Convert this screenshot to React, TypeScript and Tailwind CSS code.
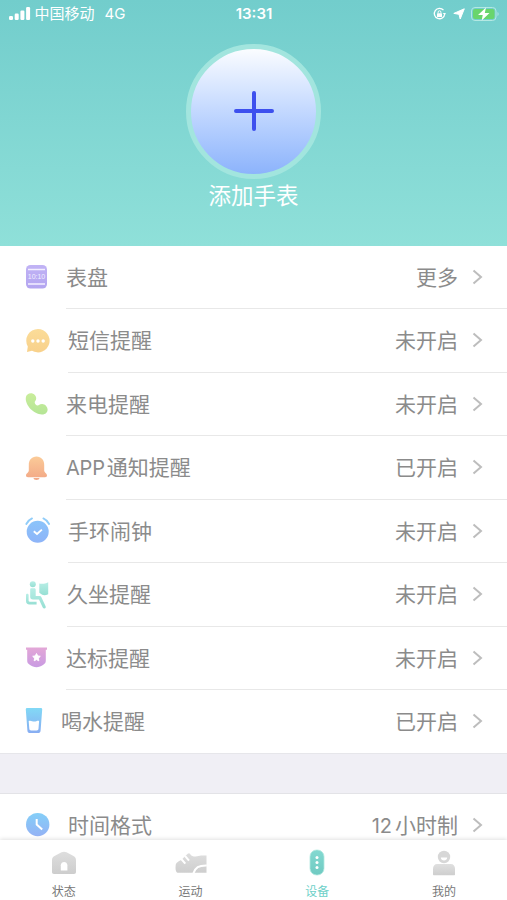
import type { ReactNode } from "react";

type Item = {
  label: ReactNode;
  value: ReactNode;
  icon: ReactNode;
  indent: string;
};

function Grad({ id, from, to }: { id: string; from: string; to: string }) {
  return (
    <linearGradient id={id} x1="0" y1="0" x2="0" y2="1">
      <stop offset="0" stopColor={from} />
      <stop offset="1" stopColor={to} />
    </linearGradient>
  );
}

function DialIcon() {
  return (
    <svg width="24" height="28" viewBox="0 0 24 28">
      <Grad id="dial" from="#c1b3f5" to="#b3a5f0" />
      <rect x="1" y="2" width="21" height="23.5" rx="4.5" fill="url(#dial)" />
      <path d="M3 6.5h17M3 21h17" stroke="#f3efff" strokeWidth="1.5" />
      <text x="11.5" y="16.2" textAnchor="middle" fontSize="7" fill="#f3efff">10:10</text>
    </svg>
  );
}

function MessageIcon() {
  return (
    <svg width="26" height="28" viewBox="0 0 26 28">
      <Grad id="msg" from="#fbdc99" to="#f8d18b" />
      <path d="M13 2a11.7 11.7 0 1 1-6 21.8L2 25l.8-5.5A11.7 11.7 0 0 1 13 2Z" fill="url(#msg)" />
      <g fill="#fff">
        <circle cx="7.8" cy="14" r="1.7" />
        <circle cx="13" cy="14" r="1.7" />
        <circle cx="18.2" cy="14" r="1.7" />
      </g>
    </svg>
  );
}

function PhoneIcon() {
  return (
    <svg width="24" height="28" viewBox="0 0 24 28">
      <Grad id="phone" from="#c9ed9b" to="#b5e596" />
      <path
        d="M.8 7.8C1 4.8 3.4 3.3 6 3.3c2.7 0 5.1 2.3 5.2 5 .1 2.2-1.6 2.8-1.5 4.2.1 1.6 1.6 3.1 3 3 1.2-.1 1.8-1.7 4.5-1.6 3 .2 5.3 2.8 5.4 5.5.1 3-2.1 4.9-5.4 5C9 24.6.1 15.5.8 7.8Z"
        fill="url(#phone)"
      />
    </svg>
  );
}

function BellIcon() {
  return (
    <svg width="24" height="28" viewBox="0 0 24 28">
      <Grad id="bell" from="#fbcb98" to="#f2a786" />
      <path
        d="M11.5 2.6c4.8 0 7.7 3.6 7.7 8.2v5.7c0 2.2 2.8 2.6 2.8 5 0 1.2-.7 1.7-2 1.7H3c-1.3 0-2-.5-2-1.7 0-2.4 2.8-2.8 2.8-5v-5.7c0-4.6 2.9-8.2 7.7-8.2ZM8.5 24h6c0 1.2-1.4 1.9-3 1.9s-3-.7-3-1.9Z"
        fill="url(#bell)"
      />
    </svg>
  );
}

function AlarmIcon() {
  return (
    <svg width="26" height="28" viewBox="0 0 26 28">
      <Grad id="alarm" from="#8bc4fa" to="#8eb4f8" />
      <circle cx="12.7" cy="14.7" r="11" fill="url(#alarm)" />
      <path d="M1.3 7C2.6 4.5 4.6 2.5 7 1.4M24.1 7c-1.3-2.5-3.3-4.5-5.7-5.6" stroke="#91cdf9" strokeWidth="1.9" strokeLinecap="round" fill="none" />
      <path d="m8.8 14.3 3.2 2.7 4.9-4.4" stroke="#fff" strokeWidth="1.9" fill="none" />
    </svg>
  );
}

function SitIcon() {
  return (
    <svg width="26" height="30" viewBox="0 0 26 30">
      <Grad id="sit" from="#b8eee6" to="#96dfd3" />
      <g fill="url(#sit)">
        <circle cx="7.8" cy="4.2" r="3" />
        <path d="M14.3 3.6c3.3.5 6.1 0 8.9-1.4v12c-2.4 1.2-4.5 1.2-6 .6l-2.9-2Z" />
        <path d="M6.4 8.2h2.8c1 0 1.5.6 1.5 1.6v6.1h3.6c1 0 1.7.5 2.1 1.4l4.2 9c.5 1.2-.1 2.1-1.1 2.1-.9 0-1.5-.4-1.9-1.2L14 19.6H8c-1.9 0-2.8-1-2.8-2.8V9.6c0-.9.4-1.4 1.2-1.4Z" />
        <path d="M1 15c0-1.7 2.6-1.7 2.6 0v5.6c0 .7.4 1.1 1.1 1.1h6.9v2.8H4.6C2.2 24.500 1 23.300 1 21Z" />
      </g>
    </svg>
  );
}

function BadgeIcon() {
  return (
    <svg width="24" height="28" viewBox="0 0 24 28">
      <Grad id="badge" from="#e3a7d7" to="#c99be2" />
      <path d="M1 3.5h21v2.3h-1.2v10.8c0 2-.6 3.1-2.5 4.1-2 1.300-4.500 2.500-6.800 2.500s-4.800-1.200-6.800-2.500c-1.900-1-2.500-2.100-2.500-4.100V5.800H1Z" fill="url(#badge)" />
      <path d="m11.5 9.500 1.200 2.400 2.600.4-1.900 1.900.4 2.600-2.300-1.200-2.300 1.200.4-2.600-1.900-1.900 2.600-.4Z" fill="#fff" stroke="#fff" strokeLinejoin="round" />
    </svg>
  );
}

function CupIcon() {
  return (
    <svg width="20" height="28" viewBox="0 0 20 28">
      <Grad id="cup" from="#82d9f6" to="#88adf2" />
      <path d="M2.2 1h13.6c1 0 1.5.6 1.4 1.6l-1.600 20.800c-.1 1.800-1.100 2.600-2.800 2.600H5.200c-1.700 0-2.700-.8-2.800-2.600L.8 2.600C.7 1.600 1.200 1 2.200 1Z" fill="url(#cup)" />
      <path d="M3.700 14c2.100-1 3.400.6 5.500.6s3.100-1.200 4.900-.6l-.6 7.800c-.1 1.200-.7 1.700-1.800 1.700H6.100c-1.100 0-1.700-.5-1.800-1.700Z" fill="#fff" />
    </svg>
  );
}

function ClockIcon() {
  return (
    <svg width="26" height="28" viewBox="0 0 26 28">
      <Grad id="clock" from="#84cff8" to="#94b2f5" />
      <circle cx="12.7" cy="13.6" r="11.7" fill="url(#clock)" />
      <path d="M11.7 8v5.500l5.500 5" stroke="#fff" strokeWidth="2" fill="none" />
    </svg>
  );
}

const LATIN = "font-['Inter','Noto_Sans_CJK_SC',sans-serif] text-[20px]";

const items: Item[] = [
  { label: "表盘", value: "更多", icon: <DialIcon />, indent: "pl-[66px]" },
  { label: "短信提醒", value: "未开启", icon: <MessageIcon />, indent: "pl-[68px]" },
  { label: "来电提醒", value: "未开启", icon: <PhoneIcon />, indent: "pl-[66px]" },
  {
    label: <><span className={`${LATIN} mr-[2px] tracking-[-0.2px]`}>APP</span>通知提醒</>,
    value: "已开启",
    icon: <BellIcon />,
    indent: "pl-[66px]",
  },
  { label: "手环闹钟", value: "未开启", icon: <AlarmIcon />, indent: "pl-[68px]" },
  { label: "久坐提醒", value: "未开启", icon: <SitIcon />, indent: "pl-[67px]" },
  { label: "达标提醒", value: "未开启", icon: <BadgeIcon />, indent: "pl-[66px]" },
  { label: "喝水提醒", value: "已开启", icon: <CupIcon />, indent: "pl-[61px]" },
];

const timeItem: Item = {
  label: "时间格式",
  value: <><span className={`${LATIN} mr-[3px]`}>12</span>小时制</>,
  icon: <ClockIcon />,
  indent: "pl-[68px]",
};

function Row({ item, last }: { item: Item; last?: boolean }) {
  return (
    <div className={`grid h-[63.5px] shrink-0 grid-cols-1 ${last ? "border-b border-[#e6e6ea]" : ""}`}>
      <div className="col-start-1 row-start-1 flex items-center pl-[25px]">{item.icon}</div>
      <div className={`col-start-1 row-start-1 flex ${item.indent}`}>
        <div className={`flex flex-1 items-center justify-between pr-6 text-[21px] leading-[30px] text-[#8b8b8b] ${last ? "" : "border-b border-[#e8e8e8]"}`}>
          <span className="whitespace-nowrap pt-[2px]">{item.label}</span>
          <span className="flex items-center gap-[14px] whitespace-nowrap">
            <span className="pt-[2px]">{item.value}</span>
            <svg width="11" height="16" viewBox="0 0 11 16" fill="none" stroke="#bdbdbd" strokeWidth="2">
              <path d="m1.500 1.500 7.500 6.500-7.500 6.500" />
            </svg>
          </span>
        </div>
      </div>
    </div>
  );
}

function StatusBar() {
  return (
    <div className="flex h-7 w-full items-center justify-between pl-[9px] pr-[8px] text-white">
      <div className="flex flex-1 items-center text-[15px]">
        <svg width="22" height="14" viewBox="0 0 22 14" fill="#fff">
          <rect x="0" y="9" width="4" height="4" rx="1.2" />
          <rect x="5.700" y="6.500" width="4" height="6.500" rx="1.2" />
          <rect x="11.400" y="3.500" width="4" height="9.500" rx="1.2" />
          <rect x="17.100" y="0" width="4" height="13" rx="1.2" />
        </svg>
        <span className="ml-[3.5px]">中国移动</span>
        <span className="ml-[10px] font-['Inter',sans-serif]">4G</span>
      </div>
      <span className="font-['Inter',sans-serif] text-[15px] font-semibold">13:31</span>
      <div className="flex flex-1 items-center justify-end gap-[7px]">
        <svg width="13" height="14" viewBox="0 0 13 14" fill="none" stroke="#fff">
          <path d="M10.500 3.200A5.200 5.200 0 1 0 11.700 7" strokeWidth="1.300" />
          <path d="m9.600 6 2 2 1.400-2Z" fill="#fff" stroke="none" />
          <rect x="4" y="6.200" width="5" height="3.800" rx=".6" fill="#fff" stroke="none" />
          <path d="M5.100 6.400V5.200a1.400 1.400 0 0 1 2.800 0v1.200" />
        </svg>
        <svg width="12" height="12" viewBox="0 0 12 12" fill="#fff" stroke="#fff" strokeLinejoin="round">
          <path d="M11.300.8 7.200 11 6 6.300.8 5.400Z" />
        </svg>
        <svg width="28" height="16" viewBox="0 0 28 16" className="-ml-px">
          <rect x=".5" y="1.500" width="24.500" height="13" rx="3.500" fill="none" stroke="#b4e8e3" />
          <rect x="2" y="3" width="21.500" height="10" rx="2" fill="#69d56d" />
          <path d="M26.500 6v4c1.500-.6 1.500-3.400 0-4Z" fill="#b4e8e3" />
          <path d="M15 1.500 7 9h4.700l-1 5.500L18.500 7h-4.700Z" fill="#fff" />
        </svg>
      </div>
    </div>
  );
}

function TabIcon({ name }: { name: string }) {
  if (name === "shoe") {
    return (
      <svg width="32" height="26" viewBox="0 0 32 26">
        <Grad id="shoe" from="#dedede" to="#cecece" />
        <path d="M.700 15c.4-2.800 3.300-3.600 6-5.500l6-5.700c.8-.8 1.800-.9 2.400.1 1 1.700 3 2.700 5.400 2.700 2.200 0 3.800-1 5.500-1h5.500v17.200H3.200C.8 22.800.2 19.500.7 15Z" fill="url(#shoe)" />
        <path d="m6.300 9 4 4.700M10 5.900l4 4.800M18.300 23.500c2.100-6 5.200-8.200 13.500-8" stroke="#fff" strokeWidth="2" fill="none" />
      </svg>
    );
  }
  if (name === "device") {
    return (
      <svg width="18" height="28" viewBox="0 0 18 28">
        <Grad id="device" from="#83d9d1" to="#70cac2" />
        <rect x="2" y="1" width="14" height="25" rx="6.500" fill="url(#device)" stroke="#b1e8e0" strokeWidth=".8" />
        <g fill="#fff">
          <circle cx="9" cy="8.500" r="1.500" />
          <circle cx="9" cy="13.500" r="1.500" />
          <circle cx="9" cy="18.500" r="1.500" />
        </g>
      </svg>
    );
  }
  if (name === "user") {
    return (
      <svg width="24" height="26" viewBox="0 0 24 26">
        <Grad id="user" from="#dfdfdf" to="#cecece" />
        <circle cx="12" cy="7" r="6.200" fill="#d7d7d7" />
        <path d="M8.800 7.400h6.400c-.1 4-6.300 4-6.400 0Z" fill="#fff" />
        <path d="M5.400 14h13.200c3 0 4.400 2.100 4.400 5v5.200c0 .6-.3 1-1 1H2c-.7 0-1-.4-1-1V19c0-2.900 1.400-5 4.400-5Z" fill="url(#user)" />
      </svg>
    );
  }
  return (
    <svg width="26" height="26" viewBox="0 0 26 26">
      <Grad id="home" from="#dedede" to="#cdcdcd" />
      <path d="m10.500 2.300-7 3.800C1.800 7 1 8.400 1 10.300V22c0 1.300.7 2 2 2h20c1.300 0 2-.7 2-2V10.300c0-1.900-.8-3.300-2.500-4.200l-7-3.800c-1.700-.9-3.300-.9-5 0Z" fill="url(#home)" />
      <path d="M9.800 20.500v-5.200c0-4.500 6.600-4.500 6.600 0v5.200Z" fill="#fff" />
    </svg>
  );
}

const tabs = [
  { name: "home", label: "状态" },
  { name: "shoe", label: "运动" },
  { name: "device", label: "设备" },
  { name: "user", label: "我的" },
];

export default function App() {
  return (
    <div className="flex h-[900px] w-[507px] flex-col overflow-hidden bg-white font-['Liberation_Sans','Noto_Sans_CJK_SC',sans-serif]">
      <header className="flex h-[245.5px] shrink-0 flex-col items-center bg-linear-to-b from-[#72cdcc] to-[#8fe0d9]">
        <StatusBar />
        <button className="mt-[15.5px] flex size-[135px] shrink-0 items-center justify-center rounded-full border-[5px] border-[#a2e5de] bg-linear-to-b from-white to-[#88b0fb] bg-origin-border">
          <svg width="42" height="42" viewBox="0 0 42 42" stroke="#3d50ee" strokeWidth="4" strokeLinecap="round">
            <path d="M21 3v36M3 21h36" />
          </svg>
        </button>
        <span className="mt-px text-[22.5px] leading-[34px] text-white">添加手表</span>
      </header>

      <main className="flex min-h-0 flex-1 flex-col overflow-hidden">
        {items.map((item, i) => (
          <Row key={i} item={item} last={i === items.length - 1} />
        ))}
        <div className="h-[40.5px] shrink-0 border-b border-[#e3e3e7] bg-[#f0eff5]" />
        <Row item={timeItem} last />
      </main>

      <nav className="z-10 grid h-[60px] shrink-0 grid-cols-4 bg-white shadow-[0_-1px_4px_rgba(0,0,0,0.12)]">
        {tabs.map((tab) => (
          <div key={tab.name} className="flex flex-col items-center pl-px pt-2">
            <div className="flex h-[30px] items-center">
              <TabIcon name={tab.name} />
            </div>
            <span className={`mt-[5px] text-[12px] leading-[18px] ${tab.name === "device" ? "text-[#6dd0c8]" : "text-[#777]"}`}>
              {tab.label}
            </span>
          </div>
        ))}
      </nav>
    </div>
  );
}
